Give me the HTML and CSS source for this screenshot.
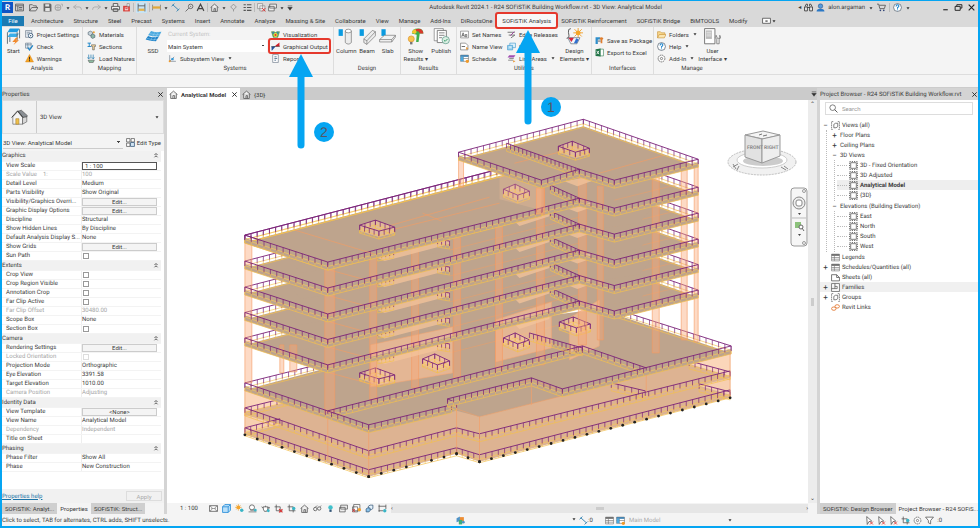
FILE: index.html
```
<!DOCTYPE html>
<html lang="en">
<head>
    <meta charset="UTF-8">
    <meta name="viewport" content="width=device-width, initial-scale=1.0">
    <title>Autodesk Revit 2024.1 - R24 SOFiSTiK Building Workflow.rvt</title>
    <link rel="stylesheet" href="styles.css">
</head>
<body>
    <!-- icon sprite -->
    <svg class="sprite" width="0" height="0">
        <symbol id="window" viewBox="0 0 16 16"><path d="M1 2h14v12H1zM1 5h14M5 5v9M7 8h6M7 11h6" fill="none" stroke="#555" stroke-width="1.5"/></symbol>
        <symbol id="open" viewBox="0 0 16 16"><path d="M1 14V3h5l2 2h5v3M1 14l4-6h11l-4 6z" fill="none" stroke="#555" stroke-width="1.4"/></symbol>
        <symbol id="save" viewBox="0 0 16 16"><path d="M1 1h12l2 2v12H1z" fill="#666"/><path d="M4 2h7v4H4zM4 9h8v5H4z" fill="#e4e4e4"/></symbol>
        <symbol id="sync" viewBox="0 0 16 16"><circle cx="7" cy="8" r="5" fill="none" stroke="#aaa" stroke-width="2"/><path d="M7 4v8M3 8h8M12 2h3v4" fill="none" stroke="#aaa" stroke-width="1.5"/></symbol>
        <symbol id="undo" viewBox="0 0 16 16"><path d="M6 3L1 7l5 4M1 7h10q4 0 4 5" fill="none" stroke="#aaa" stroke-width="1.6"/></symbol>
        <symbol id="redo" viewBox="0 0 16 16"><path d="M10 3l5 4-5 4M15 7H5q-4 0-4 5" fill="none" stroke="#aaa" stroke-width="1.6"/></symbol>
        <symbol id="print" viewBox="0 0 16 16"><path d="M4 6V1h8v5M1 6h14v6H1zM4 10h8v5H4z" fill="#eee" stroke="#555" stroke-width="1.6"/></symbol>
        <symbol id="pdf" viewBox="0 0 16 16"><path d="M2 5h12v10H2z" fill="#d9423c"/><path d="M9 1h4v5H9z" fill="#eee" stroke="#777"/><path d="M5 8h6v5H5z" fill="#f6d5d3"/><path d="M6 10h4" stroke="#c33" stroke-width="1.500"/></symbol>
        <symbol id="measure" viewBox="0 0 16 16"><path d="M2 1v14M14 1v14M2 5h12" fill="none" stroke="#555" stroke-width="1.5"/><path d="M3 10h10v4H3z" fill="#e7b34b"/></symbol>
        <symbol id="align" viewBox="0 0 16 16"><path d="M1 3v10M15 3v10" stroke="#555"/><path d="M1 6h14v4H1z" fill="#e0a83c"/></symbol>
        <symbol id="dimension" viewBox="0 0 16 16"><path d="M3 3l10 9M1 6l5-5M10 15l5-5" fill="none" stroke="#3c87b4" stroke-width="1.7"/></symbol>
        <symbol id="tag" viewBox="0 0 16 16"><circle cx="10" cy="6" r="4" fill="none" stroke="#555" stroke-width="1.4"/><path d="M7 9l-6 6M9 6h2" stroke="#555" stroke-width="1.4"/></symbol>
        <symbol id="letter" viewBox="0 0 16 16"><path d="M2 14L8 2l6 12M4.500 10h7" fill="none" stroke="#444" stroke-width="2"/></symbol>
        <symbol id="home" viewBox="0 0 16 16"><path d="M1 8l7-6 7 6M3 7v8h10V7M7 15v-5h3v5" fill="#eee" stroke="#555" stroke-width="1.4"/></symbol>
        <symbol id="section" viewBox="0 0 16 16"><path d="M8 2l5 5-5 5-5-5zM8 12v3" fill="none" stroke="#888" stroke-width="1.4"/></symbol>
        <symbol id="lines" viewBox="0 0 16 16"><path d="M1 3h4M7 3h8M1 8h4M7 8h8M1 13h4M7 13h8" stroke="#555" stroke-width="2"/></symbol>
        <symbol id="closewin" viewBox="0 0 16 16"><path d="M1 1h9v9H1zM5 5h9v9H5z" fill="#eee" stroke="#777"/><path d="M9 9l6 6M15 9l-6 6" stroke="#d33" stroke-width="1.6"/></symbol>
        <symbol id="switch" viewBox="0 0 16 16"><path d="M3 2h12v7H3zM1 6h10v8H1z" fill="#eee" stroke="#555" stroke-width="1.3"/></symbol>
        <symbol id="caret" viewBox="0 0 8 8"><path d="M2 3h4L4 6z" fill="#333"/></symbol>
        <symbol id="overflow" viewBox="0 0 8 8"><path d="M1 1h6M1 3h6L4 7z" fill="#333" stroke="#333" stroke-width=".6"/></symbol>
        <symbol id="binoculars" viewBox="0 0 16 16"><path d="M2 6l2-4h2v4M14 6l-2-4h-2v4M1 7h5v7H1zM10 7h5v7h-5zM6 8h4" fill="#eee" stroke="#333" stroke-width="1.5"/></symbol>
        <symbol id="user" viewBox="0 0 16 16"><path d="M1 15q0-5 7-5t7 5z" fill="#2b78c5"/><circle cx="8" cy="5.500" r="4" fill="#579bdc" stroke="#234e80"/></symbol>
        <symbol id="cart" viewBox="0 0 16 16"><path d="M0 2h3l2 8h8l2-6H4" fill="none" stroke="#555" stroke-width="1.5"/><circle cx="6" cy="13" r="1.500" fill="#347"/><circle cx="12" cy="13" r="1.500" fill="#347"/></symbol>
        <symbol id="help" viewBox="0 0 16 16"><circle cx="8" cy="8" r="7" fill="#fff" stroke="#456" stroke-width="1.2"/><path d="M5.500 6q0-3 2.500-3t2.500 2.500q0 1.500-2.500 3v1.500M8 11.500v1.500" fill="none" stroke="#1681cc" stroke-width="1.800"/></symbol>
        <symbol id="min" viewBox="0 0 16 16"><path d="M4 12h8" stroke="#222" stroke-width="2"/></symbol>
        <symbol id="restore" viewBox="0 0 16 16"><path d="M5 6V3h9v6h-3M2 6h9v7H2z" fill="none" stroke="#222" stroke-width="1.700"/></symbol>
        <symbol id="close" viewBox="0 0 16 16"><path d="M3 3l10 10M13 3L3 13" stroke="#222" stroke-width="2"/></symbol>
        <symbol id="panel-toggle" viewBox="0 0 16 16"><path d="M1 4h14v9H1z" fill="#fff" stroke="#555" stroke-width="1.500"/><path d="M6 8h4v2H6z" fill="#333"/></symbol>

        <!-- ribbon -->
        <symbol id="start" viewBox="0 0 24 28"><path d="M6 1h16l-4 6H2z" fill="#1e9be0"/><path d="M6 9h15l-4 6H2z" fill="#3baee8"/><path d="M2 7v19M18 7v14M22 2v15M6 15v8" stroke="#5b6770" stroke-width="1.500" fill="none"/><path d="M16 16l-6 7h5l-3 5 9-8h-5l4-4z" fill="#f28a2c"/></symbol>
        <symbol id="proj" viewBox="0 0 16 16"><path d="M1 1h11v12H1z" fill="#e8eef4" stroke="#567"/><path d="M3 4h6M3 7h4" stroke="#567"/><circle cx="10" cy="10" r="4" fill="#fff" stroke="#357" stroke-width="1.500"/><circle cx="10" cy="10" r="1.300" fill="#357"/></symbol>
        <symbol id="check" viewBox="0 0 16 16"><path d="M1 2h10v9H1zM1 5h10M5 2v9" fill="#dff0fa" stroke="#567"/><path d="M5 10l3 4 6-8" fill="none" stroke="#2086c8" stroke-width="2.200"/></symbol>
        <symbol id="warning" viewBox="0 0 16 16"><path d="M8 1l7 13H1z" fill="#f5a623" stroke="#e08a1e"/><path d="M8 5v5M8 11v2" stroke="#222" stroke-width="1.600"/></symbol>
        <symbol id="materials" viewBox="0 0 16 16"><path d="M2 4l4-2 4 2v4l-4 2-4-2z" fill="#c6d4da" stroke="#456"/><path d="M7 9l3-2 4 2v4l-4 2-3-2z" fill="#8fb7a7" stroke="#456"/><circle cx="12" cy="4" r="2" fill="#e9a33b"/></symbol>
        <symbol id="sections" viewBox="0 0 16 16"><path d="M1 2h6M4 2v6M1 8h6" stroke="#2086c8" stroke-width="1.700"/><path d="M8 5h7v3h-2v6h-3V8H8z" fill="#f3d59a" stroke="#555"/></symbol>
        <symbol id="natures" viewBox="0 0 16 16"><path d="M3 1v7M7 1v7M11 1v7M1 6l2 3 2-3M9 6l2 3 2-3" fill="none" stroke="#287db1" stroke-width="1.300"/><path d="M2 11h11l-2 4H4z" fill="#8cbfa1" stroke="#555"/></symbol>
        <symbol id="ssd" viewBox="0 0 28 28"><path d="M10 5q6 3 17 1l-4 8Q13 14 5 12z" fill="#4ba9df"/><path d="M5 13q8 4 18 1l-5 8Q9 22 1 19z" fill="#1f83c9"/><path d="M16 7L9 21M22 7l-8 15M7 9q9 3 18 2M3 17q9 3 17 2" stroke="#9fd3f0" stroke-width=".8" fill="none"/></symbol>
        <symbol id="subsystem" viewBox="0 0 16 16"><path d="M3 2v11h11M3 13l8-8" fill="none" stroke="#567"/><path d="M6 7h4v4H6z" fill="#3498d8"/><circle cx="3" cy="13" r="1.800" fill="#f09a2a"/></symbol>
        <symbol id="visual" viewBox="0 0 16 16"><path d="M1 3h5l2 2 2-2h5l-3 10H4z" fill="#67bd53" stroke="#3b7c46"/><circle cx="8" cy="9" r="3.500" fill="#f3d33c"/><circle cx="8" cy="9" r="1.800" fill="#d33"/><circle cx="4" cy="5" r="1.500" fill="#37c"/><circle cx="12" cy="5" r="1.500" fill="#37c"/></symbol>
        <symbol id="graph" viewBox="0 0 16 16"><path d="M1 8l7-.5V8L2 15H1z" fill="#27549f"/><path d="M8 8V6l7-5v7z" fill="#d5202a"/><path d="M0 8.500L16 7.500" stroke="#222" stroke-width=".9"/></symbol>
        <symbol id="report" viewBox="0 0 16 16"><path d="M3 1h10v14H3z" fill="#fff" stroke="#567"/><path d="M6 5h4M6 8h5M6 11h3" stroke="#357" stroke-width="1.300"/></symbol>
        <symbol id="column" viewBox="0 0 28 28"><path d="M1 2h7v11H1z" fill="#0b9be0"/><path d="M12 5v19q5 5 10 0V5z" fill="#ececec" stroke="#666"/><ellipse cx="17" cy="5" rx="5" ry="3" fill="#fff" stroke="#666"/></symbol>
        <symbol id="beam" viewBox="0 0 28 28"><path d="M1 2h7v11H1z" fill="#0b9be0"/><path d="M8 18L22 4l5 2v7L13 27l-5-3z" fill="#ececec" stroke="#666"/><path d="M8 18l5 3v6M13 21L27 6" fill="none" stroke="#666"/></symbol>
        <symbol id="slab" viewBox="0 0 28 28"><path d="M4 2h7v11H4z" fill="#0b9be0"/><path d="M1 19l8-7h18l-6 7v4H1zM1 19h20M27 12v3l-6 8" fill="#f2f2f2" stroke="#666"/></symbol>
        <symbol id="results" viewBox="0 0 28 28"><path d="M8 9q0-8 10-8 9 0 9 8h-6l-2 14h-4l1-12z" fill="#3fae49"/><path d="M14 2q12-3 13 7h-6q-1-4-7-4z" fill="#d8392b"/><path d="M8 8q1-6 6-6l2 5-3 3z" fill="#f6c52e"/><circle cx="7" cy="18" r="5" fill="#f8c44f" stroke="#d98b28"/><path d="M5 23h4v4H5z" fill="#777"/></symbol>
        <symbol id="publish" viewBox="0 0 28 28"><path d="M2 1h15v20H2z" fill="#fff" stroke="#666"/><path d="M7 4h15v20H7zM10 8h9M10 12h9M10 16h5" fill="#fff" stroke="#666" stroke-width="1.300"/><circle cx="21" cy="20" r="6" fill="#dcefe4" stroke="#487"/><path d="M18 20l2 2 4-4" fill="none" stroke="#396" stroke-width="1.600"/></symbol>
        <symbol id="names" viewBox="0 0 16 16"><path d="M1 2h14v12H1z" fill="#fff" stroke="#666"/><path d="M3 12l2.500-7L8 12M4 10h3M12 12V8H9.500v4H12" fill="none" stroke="#444" stroke-width="1.200"/></symbol>
        <symbol id="nameview" viewBox="0 0 16 16"><path d="M1 2h9l4 4v8H1z" fill="#fff" stroke="#555"/><path d="M3 8h6" stroke="#555" stroke-width="1.500"/><path d="M11 9l4 2-4 3z" fill="#e9952f"/></symbol>
        <symbol id="schedule" viewBox="0 0 16 16"><path d="M1 2h14v11H1z" fill="#fff" stroke="#666"/><path d="M1 2h14v3H1z" fill="#357cae"/><path d="M1 8h14M6 5v8" stroke="#666"/><path d="M1 5h5v8H1z" fill="#4ba9df"/><circle cx="13" cy="13" r="3" fill="#f09a2a"/></symbol>
        <symbol id="edge" viewBox="0 0 16 16"><path d="M1 4h13M3 9h11l-7 5" fill="none" stroke="#666" stroke-width="1.500"/><path d="M6 10l7-7" stroke="#9a3f9c" stroke-width="1.700"/></symbol>
        <symbol id="links" viewBox="0 0 16 16"><path d="M5 2h10v8H5z" fill="#dff1fb" stroke="#2a8fca"/><path d="M1 6h9v8H1z" fill="#9ed4f1" stroke="#2a8fca"/><path d="M4 9h4" stroke="#fff" stroke-width="1.500"/></symbol>
        <symbol id="areas" viewBox="0 0 16 16"><path d="M4 2h11l-3 4H1z" fill="#a14eb1"/><path d="M4 8h8M2 11h9" stroke="#777" stroke-width="1.400"/><path d="M11 11l4 2-4 2z" fill="#e9952f"/></symbol>
        <symbol id="elements" viewBox="0 0 28 28"><path d="M8 1q-5 0-4 6l1 6q0 4-4 4" fill="none" stroke="#555" stroke-width="1.500"/><path d="M20 0v16M12 8h16M14 2l12 12M26 2L14 14" stroke="#f0a02c" stroke-width="1.500"/><circle cx="20" cy="8" r="4" fill="#f6a526"/><path d="M3 16h20l-5 10H8z" fill="#f4f7fb" stroke="#456"/><path d="M4 16h9l-4 7z" fill="#d7263d"/><path d="M13 25l4-8 4 2-3 6z" fill="#2f6fd0"/></symbol>
        <symbol id="package" viewBox="0 0 16 16"><path d="M1 2h8v4H5v8H1z" fill="#2d8ecb"/><path d="M8 4q3-4 7 0l-2 3v6h-3V7z" fill="#df7e2f"/><path d="M5 8h5v2H5z" fill="#777"/></symbol>
        <symbol id="excel" viewBox="0 0 16 16"><path d="M8 2h7v12H8z" fill="#fff" stroke="#217346"/><path d="M1 2l9-1v14l-9-1z" fill="#217346"/><path d="M3 5l4 6M7 5l-4 6" stroke="#fff" stroke-width="1.500"/></symbol>
        <symbol id="folders" viewBox="0 0 16 16"><path d="M1 14V3h5l2 2h6v3" fill="#f7d78d" stroke="#c48a2a"/><path d="M1 14l3-6h12l-3 6z" fill="#fbe5b0" stroke="#c48a2a"/></symbol>
        <symbol id="gear" viewBox="0 0 16 16"><circle cx="8" cy="8" r="6" fill="#fff" stroke="#666" stroke-width="1.600" stroke-dasharray="3 1"/><circle cx="8" cy="8" r="2" fill="none" stroke="#666" stroke-width="1.400"/></symbol>
        <symbol id="ui" viewBox="0 0 28 28"><path d="M1 1h17v25H1z" fill="#fff" stroke="#666" stroke-width="1.400"/><path d="M3 4h10v14H3z" fill="#bbb"/><path d="M4 7h8M4 10h8M4 13h8" stroke="#fff"/><path d="M20 12q-3 4 1 7v7h4v-7q4-3 1-7v5h-4z" fill="#eee" stroke="#555"/></symbol>

        <!-- browser tree -->
        <symbol id="views" viewBox="0 0 16 16"><path d="M4 1H1v14h3M12 1h3v14h-3" fill="none" stroke="#666" stroke-width="1.300" stroke-dasharray="3 1"/><path d="M5 6l3-2h4v6l-3 2H5z" fill="none" stroke="#555" stroke-width="1.300"/></symbol>
        <symbol id="view" viewBox="0 0 16 16"><path d="M3 3h10v10H3z" fill="#fff" stroke="#555" stroke-width="1.300"/><path d="M1 1h14v14H1z" fill="none" stroke="#555" stroke-width="1.600" stroke-dasharray="2 2"/></symbol>
        <symbol id="legend" viewBox="0 0 16 16"><path d="M1 2h14v12H1zM1 8h14M1 11h14M6 5v9" fill="#fff" stroke="#666"/><path d="M1 2h14v3H1z" fill="#666"/></symbol>
        <symbol id="sheet" viewBox="0 0 16 16"><path d="M1 3h9l5 5v6H1zM10 3v5h5" fill="#fff" stroke="#555" stroke-width="1.400"/></symbol>
        <symbol id="family" viewBox="0 0 16 16"><path d="M1 1h14v14H1zM1 10h6V1M7 6h4v4H7" fill="#fff" stroke="#555" stroke-width="1.300"/></symbol>
        <symbol id="rlink" viewBox="0 0 16 16"><ellipse cx="5" cy="10" rx="4" ry="3" fill="none" stroke="#e37a35" stroke-width="1.600"/><ellipse cx="11" cy="6" rx="4" ry="3" fill="none" stroke="#e37a35" stroke-width="1.600"/></symbol>
        <symbol id="search" viewBox="0 0 16 16"><circle cx="6.500" cy="6.500" r="5" fill="none" stroke="#555" stroke-width="1.300"/><path d="M10 10l5 5" stroke="#555" stroke-width="1.700"/></symbol>
        <symbol id="house" viewBox="0 0 28 28"><path d="M3 13L11 4l8 9v12H3z" fill="#f5f5f5" stroke="#555"/><path d="M11 4l6-2 10 9-1 2-7 1z" fill="#8a8f94" stroke="#444"/><path d="M19 14l7-1v8l-7 4z" fill="#d8d8d8" stroke="#555"/><path d="M8 16h5v9H8z" fill="#f0c04a" stroke="#a98330"/><path d="M1 14L11 3l9 11" fill="none" stroke="#444" stroke-width="1.600"/></symbol>
        <symbol id="type" viewBox="0 0 16 16"><path d="M1 1h6v6H1zM9 1h6v6H9zM1 9h6v6H1z" fill="#fff" stroke="#555" stroke-width="1.300"/><path d="M8 8h7v7H8z" fill="#cfe3f3" stroke="#357" stroke-width="1.300"/></symbol>
        <symbol id="collapse" viewBox="0 0 8 8"><path d="M2 4l2-2 2 2M2 7l2-2 2 2" fill="none" stroke="#222"/></symbol>

        <!-- view bar -->
        <symbol id="detail" viewBox="0 0 16 16"><path d="M1 3h14v10H1z" fill="#fff" stroke="#555" stroke-width="1.400"/><path d="M1 3l4 3v4l-4 3M15 3l-4 3v4l4 3M5 8h6" fill="none" stroke="#555"/></symbol>
        <symbol id="cube" viewBox="0 0 16 16"><path d="M1 5l4-4h10v10l-4 4H1zM1 5h10v10M11 5l4-4" fill="#b9e0fa" stroke="#1d87d6" stroke-width="1.400"/></symbol>
        <symbol id="displace" viewBox="0 0 16 16"><path d="M6 4l3-2h5v6l-3 2H6z" fill="#e4f2fb" stroke="#357" stroke-width="1.300"/><path d="M2 9l2-2h5v5l-2 2H2z" fill="#8cc4ea" stroke="#357" stroke-width="1.300"/></symbol>
        <symbol id="sun" viewBox="0 0 16 16"><path d="M6 0v12M0 6h12M2 2l8 8M10 2l-8 8" stroke="#ee9d2b"/><circle cx="6" cy="6" r="3.500" fill="#f5a52d"/><circle cx="12" cy="11" r="3" fill="#39b5c6"/></symbol>
        <symbol id="shadow" viewBox="0 0 16 16"><circle cx="7" cy="6" r="4.500" fill="#fff" stroke="#555" stroke-width="1.400"/><path d="M1 14h14M4 11h7" stroke="#777" stroke-width="1.500"/><circle cx="13" cy="11" r="2.500" fill="#39b5c6"/></symbol>
        <symbol id="teapot" viewBox="0 0 16 16"><path d="M4 5h8q1 4-2 8H6Q3 9 4 5zM4 7L1 5M8 5V3M12 6h3l-2 4" fill="#fff" stroke="#555" stroke-width="1.400"/><circle cx="13" cy="12" r="2.500" fill="#39b5c6"/></symbol>
        <symbol id="cropx" viewBox="0 0 16 16"><path d="M4 1v11h11M1 5h10v10" fill="none" stroke="#555" stroke-width="1.400"/><path d="M9 9l6 6M15 9l-6 6" stroke="#d33" stroke-width="2"/></symbol>
        <symbol id="crop" viewBox="0 0 16 16"><path d="M4 1v11h11M1 5h10v10" fill="none" stroke="#555" stroke-width="1.400"/><circle cx="12" cy="8" r="3" fill="#39b5c6"/></symbol>
        <symbol id="constraints" viewBox="0 0 16 16"><path d="M2 1v13M1 4h13M14 1v8M1 12h8" fill="none" stroke="#555" stroke-width="1.400"/><circle cx="12" cy="12" r="3" fill="#39b5c6"/></symbol>
        <symbol id="glasses" viewBox="0 0 16 16"><circle cx="4" cy="9" r="3" fill="none" stroke="#555" stroke-width="1.400"/><circle cx="11" cy="8" r="3" fill="none" stroke="#555" stroke-width="1.400"/><path d="M3 6l5-3M12 5l3-2" stroke="#555"/></symbol>
        <symbol id="bulb" viewBox="0 0 16 16"><circle cx="8" cy="6" r="4" fill="#3fc1cb"/><path d="M6 10h4v4H6z" fill="#357"/></symbol>
        <symbol id="analytic" viewBox="0 0 16 16"><path d="M3 1h11v11H3zM1 5h9v9H1z" fill="#fff" stroke="#555" stroke-width="1.300"/><path d="M1 9l4 5M5 9l-4 5" stroke="#d33" stroke-width="1.500"/><circle cx="13" cy="10" r="3" fill="#f3a12e"/></symbol>
        <symbol id="funnel" viewBox="0 0 16 16"><path d="M1 2h14l-5 6v6l-4-2V8z" fill="#fff" stroke="#555" stroke-width="1.400"/></symbol>
        <symbol id="select" viewBox="0 0 16 16"><path d="M3 1l9 8-5 1-3 5z" fill="#fff" stroke="#555" stroke-width="1.400"/><path d="M9 10l5 5M14 10l-5 5" stroke="#d33" stroke-width="1.600"/></symbol>
        <symbol id="worksets" viewBox="0 0 16 16"><path d="M1 4l6-3v8l-6 2z" fill="#4f93c8"/><path d="M7 2h7v7H7z" fill="#ed8d33"/><path d="M5 7h6v8H5z" fill="#3fae77"/><circle cx="13" cy="11" r="2.500" fill="#4f93c8"/></symbol>
    </svg>

    <div class="app">
        <header class="titlebar">
            <div class="qat">
                <span class="logo">R</span>
                <svg class="ic"><use href="#window"/></svg>
                <i class="space"></i>
                <svg class="ic"><use href="#open"/></svg>
                <i class="space"></i>
                <svg class="ic"><use href="#save"/></svg>
                <svg class="ic"><use href="#sync"/></svg>
                <svg class="caret"><use href="#caret"/></svg>
                <svg class="ic"><use href="#undo"/></svg>
                <svg class="caret"><use href="#caret"/></svg>
                <svg class="ic"><use href="#redo"/></svg>
                <svg class="caret"><use href="#caret"/></svg>
                <svg class="ic"><use href="#print"/></svg>
                <svg class="ic"><use href="#pdf"/></svg>
                <i class="bar"></i>
                <span class="active"><svg class="ic"><use href="#measure"/></svg></span>
                <i class="bar"></i>
                <svg class="ic"><use href="#align"/></svg>
                <svg class="caret"><use href="#caret"/></svg>
                <svg class="ic"><use href="#dimension"/></svg>
                <i class="space"></i>
                <svg class="ic"><use href="#tag"/></svg>
                <svg class="ic"><use href="#letter"/></svg>
                <i class="bar"></i>
                <svg class="ic"><use href="#home"/></svg>
                <svg class="caret"><use href="#caret"/></svg>
                <svg class="ic"><use href="#section"/></svg>
                <i class="space"></i>
                <svg class="ic"><use href="#lines"/></svg>
                <i class="bar"></i>
                <svg class="ic"><use href="#closewin"/></svg>
                <svg class="ic"><use href="#switch"/></svg>
                <svg class="caret"><use href="#caret"/></svg>
                <svg class="caret"><use href="#overflow"/></svg>
            </div>
            <div class="title">Autodesk Revit 2024.1 - R24 SOFiSTiK Building Workflow.rvt - 3D View: Analytical Model</div>
            <div class="account">
                <span class="back">◂</span>
                <svg class="ic"><use href="#binoculars"/></svg>
                <svg class="ic"><use href="#user"/></svg>
                <span>alon.argaman</span>
                <svg class="caret"><use href="#caret"/></svg>
                <svg class="ic"><use href="#cart"/></svg>
                <i class="bar"></i>
                <svg class="ic"><use href="#help"/></svg>
                <svg class="caret"><use href="#caret"/></svg>
            </div>
            <div class="win-buttons">
                <svg class="ic"><use href="#min"/></svg>
                <svg class="ic"><use href="#restore"/></svg>
                <svg class="ic"><use href="#close"/></svg>
            </div>
        </header>

        <nav class="tabs">
            <button class="file">File</button>
            <button>Architecture</button>
            <button>Structure</button>
            <button>Steel</button>
            <button>Precast</button>
            <button>Systems</button>
            <button>Insert</button>
            <button>Annotate</button>
            <button>Analyze</button>
            <button>Massing &amp; Site</button>
            <button>Collaborate</button>
            <button>View</button>
            <button>Manage</button>
            <button>Add-Ins</button>
            <button>DiRootsOne</button>
            <button class="current marked">SOFiSTiK Analysis</button>
            <button>SOFiSTiK Reinforcement</button>
            <button>SOFiSTiK Bridge</button>
            <button>BiMTOOLS</button>
            <button>Modify</button>
            <svg class="ic toggle"><use href="#panel-toggle"/></svg>
            <svg class="caret"><use href="#caret"/></svg>
        </nav>

        <section class="ribbon">
            <div class="group g-analysis">
                <div class="tools">
                    <button class="big"><svg><use href="#start"/></svg>Start</button>
                    <div class="stack">
                        <button><svg class="ic"><use href="#proj"/></svg>Project Settings</button>
                        <button><svg class="ic"><use href="#check"/></svg>Check</button>
                        <button><svg class="ic"><use href="#warning"/></svg>Warnings</button>
                    </div>
                </div>
                <div class="name">Analysis</div>
            </div>
            <div class="group g-mapping">
                <div class="tools">
                    <div class="stack">
                        <button><svg class="ic"><use href="#materials"/></svg>Materials</button>
                        <button><svg class="ic"><use href="#sections"/></svg>Sections</button>
                        <button><svg class="ic"><use href="#natures"/></svg>Load Natures</button>
                    </div>
                </div>
                <div class="name">Mapping</div>
            </div>
            <div class="group g-systems">
                <div class="tools">
                    <button class="big ssd"><svg><use href="#ssd"/></svg>SSD</button>
                    <div class="stack system">
                        <label for="system">Current System:</label>
                        <select id="system"><option>Main System</option></select>
                        <button><svg class="ic"><use href="#subsystem"/></svg>Subsystem View<svg class="caret"><use href="#caret"/></svg></button>
                    </div>
                    <div class="stack">
                        <button><svg class="ic"><use href="#visual"/></svg>Visualization</button>
                        <button class="marked"><svg class="ic"><use href="#graph"/></svg>Graphical Output</button>
                        <button><svg class="ic"><use href="#report"/></svg>Report</button>
                    </div>
                </div>
                <div class="name">Systems</div>
            </div>
            <div class="group g-design">
                <div class="tools">
                    <button class="big"><svg><use href="#column"/></svg>Column</button>
                    <button class="big"><svg><use href="#beam"/></svg>Beam</button>
                    <button class="big"><svg><use href="#slab"/></svg>Slab</button>
                </div>
                <div class="name">Design</div>
            </div>
            <div class="group g-results">
                <div class="tools">
                    <button class="big"><svg><use href="#results"/></svg>Show<br>Results ▾</button>
                    <button class="big"><svg><use href="#publish"/></svg>Publish</button>
                </div>
                <div class="name">Results</div>
            </div>
            <div class="group g-utilities">
                <div class="tools">
                    <div class="stack">
                        <button><svg class="ic"><use href="#names"/></svg>Set Names</button>
                        <button><svg class="ic"><use href="#nameview"/></svg>Name View</button>
                        <button><svg class="ic"><use href="#schedule"/></svg>Schedule</button>
                    </div>
                    <div class="stack">
                        <button><svg class="ic"><use href="#edge"/></svg>Edge Releases</button>
                        <button><svg class="ic"><use href="#links"/></svg>Links</button>
                        <button><svg class="ic"><use href="#areas"/></svg>Link Areas<svg class="caret"><use href="#caret"/></svg></button>
                    </div>
                    <button class="big"><svg><use href="#elements"/></svg>Design<br>Elements ▾</button>
                </div>
                <div class="name">Utilities</div>
            </div>
            <div class="group g-interfaces">
                <div class="tools">
                    <div class="stack two">
                        <button><svg class="ic"><use href="#package"/></svg>Save as Package</button>
                        <button><svg class="ic"><use href="#excel"/></svg>Export to Excel</button>
                    </div>
                </div>
                <div class="name">Interfaces</div>
            </div>
            <div class="group g-manage">
                <div class="tools">
                    <div class="stack">
                        <button><svg class="ic"><use href="#folders"/></svg>Folders<svg class="caret"><use href="#caret"/></svg></button>
                        <button><svg class="ic"><use href="#help"/></svg>Help<svg class="caret"><use href="#caret"/></svg></button>
                        <button><svg class="ic"><use href="#gear"/></svg>Add-In<svg class="caret"><use href="#caret"/></svg></button>
                    </div>
                    <button class="big"><svg><use href="#ui"/></svg>User<br>Interface ▾</button>
                </div>
                <div class="name">Manage</div>
            </div>
        </section>
        <div class="options-bar"></div>

        <main class="workspace">
            <aside class="dock properties">
                <h2>Properties<svg class="ic"><use href="#close"/></svg></h2>
                <div class="type">
                    <span class="thumb"><svg><use href="#house"/></svg></span>
                    <span class="type-name">3D View</span>
                    <svg class="caret"><use href="#caret"/></svg>
                </div>
                <div class="instance">
                    <select aria-label="Instance"><option>3D View: Analytical Model</option></select>
                    <button><svg class="ic"><use href="#type"/></svg>Edit Type</button>
                </div>
                <div class="grid">
                    <table>
                        <tr class="head"><th colspan="2">Graphics<svg class="caret"><use href="#collapse"/></svg></th></tr>
                        <tr><td><label for="scale">View Scale</label></td><td><input type="text" id="scale" value="1 : 100"></td></tr>
                        <tr class="off"><td>Scale Value &nbsp;&nbsp; 1:</td><td>100</td></tr>
                        <tr><td>Detail Level</td><td>Medium</td></tr>
                        <tr><td>Parts Visibility</td><td>Show Original</td></tr>
                        <tr><td>Visibility/Graphics Overri...</td><td><button>Edit...</button></td></tr>
                        <tr><td>Graphic Display Options</td><td><button>Edit...</button></td></tr>
                        <tr><td>Discipline</td><td>Structural</td></tr>
                        <tr><td>Show Hidden Lines</td><td>By Discipline</td></tr>
                        <tr><td>Default Analysis Display S...</td><td>None</td></tr>
                        <tr><td>Show Grids</td><td><button>Edit...</button></td></tr>
                        <tr><td><label for="sun-path">Sun Path</label></td><td><input type="checkbox" id="sun-path"></td></tr>
                        <tr class="head"><th colspan="2">Extents<svg class="caret"><use href="#collapse"/></svg></th></tr>
                        <tr><td><label for="crop-view">Crop View</label></td><td><input type="checkbox" id="crop-view"></td></tr>
                        <tr><td><label for="crop-region">Crop Region Visible</label></td><td><input type="checkbox" id="crop-region"></td></tr>
                        <tr><td><label for="annotation">Annotation Crop</label></td><td><input type="checkbox" id="annotation"></td></tr>
                        <tr><td><label for="far-clip">Far Clip Active</label></td><td><input type="checkbox" id="far-clip"></td></tr>
                        <tr class="off"><td>Far Clip Offset</td><td>30480.00</td></tr>
                        <tr><td>Scope Box</td><td>None</td></tr>
                        <tr><td><label for="section-box">Section Box</label></td><td><input type="checkbox" id="section-box"></td></tr>
                        <tr class="head"><th colspan="2">Camera<svg class="caret"><use href="#collapse"/></svg></th></tr>
                        <tr><td>Rendering Settings</td><td><button>Edit...</button></td></tr>
                        <tr class="off"><td><label for="locked">Locked Orientation</label></td><td><input type="checkbox" id="locked" disabled></td></tr>
                        <tr><td>Projection Mode</td><td>Orthographic</td></tr>
                        <tr><td>Eye Elevation</td><td>3391.58</td></tr>
                        <tr><td>Target Elevation</td><td>1010.00</td></tr>
                        <tr class="off"><td>Camera Position</td><td>Adjusting</td></tr>
                        <tr class="head"><th colspan="2">Identity Data<svg class="caret"><use href="#collapse"/></svg></th></tr>
                        <tr><td>View Template</td><td><button>&lt;None&gt;</button></td></tr>
                        <tr><td>View Name</td><td>Analytical Model</td></tr>
                        <tr class="off"><td>Dependency</td><td>Independent</td></tr>
                        <tr><td>Title on Sheet</td><td></td></tr>
                        <tr class="head"><th colspan="2">Phasing<svg class="caret"><use href="#collapse"/></svg></th></tr>
                        <tr><td>Phase Filter</td><td>Show All</td></tr>
                        <tr><td>Phase</td><td>New Construction</td></tr>
                    </table>
                </div>
                <div class="apply-row">
                    <a href="#">Properties help</a>
                    <button disabled>Apply</button>
                </div>
                <div class="dock-tabs">
                    <button>SOFiSTiK: Analyt...</button>
                    <button class="current">Properties</button>
                    <button>SOFiSTiK: Struct...</button>
                </div>
            </aside>

            <section class="center">
                <div class="view-tabs">
                    <button class="current"><svg class="ic"><use href="#home"/></svg>Analytical Model<svg class="x"><use href="#close"/></svg></button>
                    <button><svg class="ic"><use href="#home"/></svg>{3D}</button>
                    <svg class="caret end"><use href="#overflow"/></svg>
                </div>
                <div class="view-body">
                    <div class="canvas">
                        <svg id="model" viewBox="167 100 642 403"></svg>
                        <svg class="viewcube" viewBox="0 0 70 50">
                            <ellipse cx="35" cy="34" rx="34" ry="13" fill="#f1f1f1" stroke="#bbb" stroke-dasharray="2 1"/>
                            <ellipse cx="35" cy="32" rx="25" ry="8" fill="#fff" stroke="#ccc"/>
                            <ellipse cx="36" cy="33" rx="20" ry="5" fill="#ccc"/>
                            <path d="M18 7L36 3l17 4-17 4z" fill="#f4f4f4" stroke="#999"/>
                            <path d="M18 7l17 4v24l-17-6z" fill="#e2e2e2" stroke="#999"/>
                            <path d="M35 11l18-4v21l-18 7z" fill="#eee" stroke="#999"/>
                            <path d="M32 7l3-1M36 8l4-1" stroke="#777"/>
                            <text x="20" y="21">FRONT</text>
                            <text x="37" y="21">RIGHT</text>
                            <path d="M6 39l5-3M6 36l3 5M12 38l-2 4M54 39l5 3M57 38l4 3" stroke="#888"/>
                        </svg>
                        <svg class="navbar" viewBox="0 0 18 60">
                            <rect x="1" y="1" width="16" height="58" rx="3" fill="#f6f6f6" stroke="#999"/>
                            <circle cx="14" cy="4" r="1.500" fill="none" stroke="#777" stroke-width=".7"/>
                            <circle cx="9" cy="16" r="6" fill="#eee" stroke="#888"/>
                            <rect x="6" y="13" width="6" height="6" rx="2" fill="#fff" stroke="#888"/>
                            <path d="M8 26h3l-1.500 2zM8 47h3l-1.500 2z" fill="#444"/>
                            <path d="M2 31h14" stroke="#bbb"/>
                            <path d="M5 35h6v6H5z" fill="#8cc27b"/>
                            <circle cx="11" cy="40" r="2" fill="#fff" stroke="#666"/>
                            <path d="M12 41l2 3" stroke="#666"/>
                            <circle cx="14" cy="56" r="1.500" fill="none" stroke="#777" stroke-width=".7"/>
                        </svg>
                    </div>
                    <div class="vscroll"><i>⌃</i><b></b><i>⌄</i></div>
                </div>
                <div class="view-bar">
                    <span class="scale">1 : 100</span>
                    <svg class="ic"><use href="#detail"/></svg>
                    <svg class="ic"><use href="#cube"/></svg>
                    <svg class="ic"><use href="#sun"/></svg>
                    <svg class="ic"><use href="#shadow"/></svg>
                    <svg class="ic"><use href="#teapot"/></svg>
                    <svg class="ic"><use href="#cropx"/></svg>
                    <svg class="ic"><use href="#crop"/></svg>
                    <svg class="ic"><use href="#home"/></svg>
                    <svg class="ic"><use href="#glasses"/></svg>
                    <svg class="ic"><use href="#bulb"/></svg>
                    <svg class="ic"><use href="#switch"/></svg>
                    <svg class="ic"><use href="#analytic"/></svg>
                    <svg class="ic"><use href="#displace"/></svg>
                    <svg class="ic"><use href="#constraints"/></svg>
                    <span class="hscroll"><i>‹</i><b></b><i>›</i></span>
                </div>
            </section>

            <aside class="dock browser">
                <h2>Project Browser - R24 SOFiSTiK Building Workflow.rvt<svg class="ic"><use href="#close"/></svg></h2>
                <div class="search">
                    <svg class="ic"><use href="#search"/></svg>
                    <input type="text" placeholder="Search" aria-label="Search">
                </div>
                <ul class="tree">
                    <li><p><i>−</i><svg class="ic"><use href="#views"/></svg>Views (all)</p>
                        <ul>
                            <li><p><i>+</i>Floor Plans</p></li>
                            <li><p><i>+</i>Ceiling Plans</p></li>
                            <li><p><i>−</i>3D Views</p>
                                <ul class="leaves">
                                    <li><p><svg class="ic"><use href="#view"/></svg>3D - Fixed Orientation</p></li>
                                    <li><p><svg class="ic"><use href="#view"/></svg>3D Adjusted</p></li>
                                    <li><p class="selected"><svg class="ic"><use href="#view"/></svg>Analytical Model</p></li>
                                    <li><p><svg class="ic"><use href="#view"/></svg>{3D}</p></li>
                                </ul>
                            </li>
                            <li><p><i>−</i>Elevations (Building Elevation)</p>
                                <ul class="leaves">
                                    <li><p><svg class="ic"><use href="#view"/></svg>East</p></li>
                                    <li><p><svg class="ic"><use href="#view"/></svg>North</p></li>
                                    <li><p><svg class="ic"><use href="#view"/></svg>South</p></li>
                                    <li><p><svg class="ic"><use href="#view"/></svg>West</p></li>
                                </ul>
                            </li>
                        </ul>
                    </li>
                    <li><p><i></i><svg class="ic"><use href="#legend"/></svg>Legends</p></li>
                    <li><p><i>+</i><svg class="ic"><use href="#legend"/></svg>Schedules/Quantities (all)</p></li>
                    <li><p><i></i><svg class="ic"><use href="#sheet"/></svg>Sheets (all)</p></li>
                    <li class="shaded"><p><i>+</i><svg class="ic"><use href="#family"/></svg>Families</p></li>
                    <li><p><i>+</i><svg class="ic"><use href="#views"/></svg>Groups</p></li>
                    <li><p><i></i><svg class="ic"><use href="#rlink"/></svg>Revit Links</p></li>
                </ul>
                <div class="dock-tabs">
                    <button>SOFiSTiK: Design Browser</button>
                    <button class="current">Project Browser - R24 SOFiS...</button>
                </div>
            </aside>
        </main>

        <footer class="status">
            <span class="hint">Click to select, TAB for alternates, CTRL adds, SHIFT unselects.</span>
            <svg class="ic"><use href="#worksets"/></svg>
            <span class="workset"><svg class="caret"><use href="#caret"/></svg></span>
            <span class="requests"><svg class="ic"><use href="#dimension"/></svg>:0</span>
            <svg class="ic"><use href="#legend"/></svg>
            <svg class="ic"><use href="#schedule"/></svg>
            <span class="option">Main Model<svg class="caret"><use href="#caret"/></svg></span>
            <span class="filters">
                <svg class="ic"><use href="#select"/></svg>
                <svg class="ic"><use href="#select"/></svg>
                <svg class="ic"><use href="#select"/></svg>
                <svg class="ic"><use href="#crop"/></svg>
                <svg class="ic"><use href="#gear"/></svg>
                <svg class="ic"><use href="#funnel"/></svg>:0
            </span>
        </footer>

        <!-- step callouts -->
        <svg class="arrow arrow-1" viewBox="0 0 26 96"><path d="M13 0l12 23H1z"/><path d="M13 20v71" class="shaft"/></svg>
        <span class="step step-1">1</span>
        <svg class="arrow arrow-2" viewBox="0 0 26 96"><path d="M13 0l12 23H1z"/><path d="M13 20v71" class="shaft"/></svg>
        <span class="step step-2">2</span>
    </div>

    <script src="model.js"></script>
</body>
</html>
```

FILE: styles.css
```
* {
    box-sizing: border-box;
}
body {
    margin: 0;
    font-family: Roboto, 'Open Sans', sans-serif;
    font-size: 6px;
    line-height: 9px;
    color: #3a3a3a;
    text-rendering: geometricPrecision;
}
button, input, select {
    font: inherit;
    color: inherit;
    border: none;
    border-radius: 0;
    background: none;
    padding: 0;
    margin: 0;
    white-space: nowrap;
}
select {
    appearance: none;
    background-image: linear-gradient(45deg, transparent 50%, #444 50%), linear-gradient(-45deg, transparent 50%, #444 50%);
    background-size: 2px 2px;
    background-position: right 4px center, right 2px center;
    background-repeat: no-repeat;
}
h2, p, ul {
    margin: 0;
    padding: 0;
    font-size: 6px;
    font-weight: normal;
}
.sprite {
    position: absolute;
}
.app {
    position: relative;
    display: flex;
    flex-direction: column;
    height: 100vh;
    border: 2px solid #05a5f2;
    border-top-width: 1px;
    background: #f4f4f4;
    overflow: hidden;
}
.ic {
    width: 9px;
    height: 9px;
    flex: none;
}
.caret {
    width: 6px;
    height: 6px;
    flex: none;
}

/* title bar */
.titlebar {
    display: flex;
    align-items: center;
    height: 13px;
    flex: none;
    background: #d9d9d9;
}
.qat, .account, .win-buttons {
    display: flex;
    align-items: center;
    gap: 2px;
}
.logo {
    width: 11px;
    height: 11px;
    background: #0f55c4;
    color: #fff;
    font-weight: bold;
    font-size: 8px;
    line-height: 11px;
    text-align: center;
}
.space {
    width: 1px;
}
.bar {
    width: 1px;
    height: 9px;
    background: #bbb;
}
.active {
    display: flex;
    padding: 1px;
    background: #c8e4f5;
}
.title {
    flex: 1;
    text-align: center;
}
.account {
    gap: 3px;
    margin-right: 30px;
}
.win-buttons {
    gap: 4px;
    margin-right: 2px;
}

/* ribbon tabs */
.tabs {
    display: flex;
    align-items: center;
    height: 13px;
    flex: none;
    background: #d9d9d9;
}
.tabs button {
    height: 13px;
    padding: 0 5px;
}
.tabs .file {
    height: 10px;
    width: 22px;
    margin-right: 2px;
    background: #1b7ab3;
    color: #fff;
}
.tabs .current {
    background: #f7f7f7;
}
.toggle {
    margin-left: 10px;
}
.marked {
    outline: 2px solid #e5392d;
    border-radius: 1px;
}

/* ribbon */
.ribbon {
    display: flex;
    height: 48px;
    flex: none;
    border-bottom: 1px solid #ddd;
}
.group {
    display: flex;
    flex-direction: column;
    flex: none;
    border-right: 1px solid #ddd;
}
.group:last-child {
    border-right: none;
}
.tools {
    display: flex;
    height: 37px;
    padding: 1px 2px 0;
}
.name {
    text-align: center;
}
.stack {
    display: flex;
    flex-direction: column;
}
.stack button, .stack label, .stack select {
    display: flex;
    align-items: center;
    gap: 3px;
    height: 12px;
    padding: 0 1px;
}
.stack.two {
    padding-top: 6px;
}
.big {
    display: flex;
    flex-direction: column;
    align-items: center;
    width: 22px;
    line-height: 8px;
}
.big svg {
    width: 17px;
    height: 17px;
    margin-bottom: 2px;
    flex: none;
}
.g-analysis { width: 81px; }
.g-mapping { width: 54px; }
.g-systems { width: 197px; }
.g-design { width: 67px; }
.g-results { width: 56px; }
.g-utilities { width: 135px; }
.g-interfaces { width: 62px; }
.g-manage { width: 76px; }
.g-results .big, .g-manage .big, .g-utilities .big {
    width: 27px;
}
.g-utilities .stack {
    width: 47px;
}
.g-utilities .stack + .stack {
    width: 55px;
}
.g-manage .stack {
    width: 43px;
}
.g-analysis .stack, .g-mapping .stack {
    margin-left: 1px;
}
.ssd {
    width: 28px;
}
.system {
    width: 103px;
}
.system label {
    color: #c4c4c4;
}
.system select {
    width: 100px;
    background-color: #fff;
}
.options-bar {
    height: 13px;
    flex: none;
    border-bottom: 1px solid #ccc;
}

/* docked panels */
.workspace {
    display: flex;
    flex: 1;
    min-height: 0;
    gap: 3px;
    background: #d4d4d4;
}
.dock {
    display: flex;
    flex-direction: column;
    flex: none;
    background: #fff;
}
.properties {
    width: 162px;
}
.browser {
    width: 158px;
}
.dock h2 {
    display: flex;
    align-items: center;
    justify-content: space-between;
    height: 12px;
    flex: none;
    background: #d4d4d4;
}
.dock h2 .ic {
    width: 7px;
    height: 7px;
}
.type {
    display: flex;
    align-items: center;
    height: 34px;
    padding-right: 3px;
    background: #f1f1f1;
    border: 1px solid #ddd;
}
.thumb {
    display: flex;
    align-items: center;
    justify-content: center;
    width: 34px;
    height: 32px;
    border-right: 1px solid #ccc;
}
.thumb svg {
    width: 17px;
    height: 17px;
}
.type-name {
    flex: 1;
    padding-left: 3px;
}
.instance {
    display: flex;
    align-items: center;
    justify-content: space-between;
    height: 17px;
    padding: 0 3px 0 1px;
    background: #f4f4f4;
}
.instance select {
    width: 120px;
    height: 13px;
    border-bottom: 1px solid #ccc;
}
.instance button {
    display: flex;
    align-items: center;
    gap: 2px;
}
.grid {
    flex: 1;
    min-height: 0;
    padding-right: 3px;
    background: #fff;
}
table {
    width: 100%;
    table-layout: fixed;
    border-collapse: collapse;
}
td, th {
    height: 9px;
    padding: 0;
    line-height: 8px;
    text-align: left;
    font-weight: normal;
    white-space: nowrap;
    border-bottom: 1px solid #f3f3f3;
}
td:first-child {
    padding-left: 4px;
    border-right: 1px solid #eee;
}
td:last-child {
    padding-right: 4px;
}
.head th {
    height: 10px;
    line-height: 9px;
    background: #f1f1f1;
}
.head .caret {
    float: right;
    margin: 1px 2px 0 0;
}
.off {
    color: #a5a5a5;
}
td button, td input[type="text"] {
    display: block;
    width: 100%;
    height: 8px;
    line-height: 6px;
    border: 1px solid #ccc;
    background: #f4f4f4;
}
td input[type="text"] {
    border-color: #555;
    background: #fff;
    padding-left: 2px;
}
input[type="checkbox"] {
    appearance: none;
    display: block;
    width: 6px;
    height: 6px;
    margin-left: 1px;
    border: 1px solid #999;
    background: #fff;
}
input[type="checkbox"]:disabled {
    border-color: #ddd;
}
.apply-row {
    display: flex;
    align-items: center;
    justify-content: space-between;
    height: 14px;
    padding-right: 2px;
    background: #f1f1f1;
}
.apply-row a {
    color: #1c74a8;
}
.apply-row button {
    width: 36px;
    height: 10px;
    border: 1px solid #ddd;
    color: #aaa;
}
.dock-tabs {
    display: flex;
    height: 11px;
    flex: none;
    background: #f4f4f4;
}
.dock-tabs button {
    padding: 0 3px;
    background: #cfcfcf;
}
.dock-tabs .current {
    background: #f4f4f4;
}

/* drawing area */
.center {
    display: flex;
    flex-direction: column;
    flex: 1;
    min-width: 0;
    background: #fff;
}
.view-tabs {
    display: flex;
    align-items: center;
    height: 12px;
    flex: none;
    background: #cbcbcb;
}
.view-tabs button {
    display: flex;
    align-items: center;
    gap: 3px;
    height: 12px;
    padding: 0 2px;
}
.view-tabs .current {
    background: #fff;
    font-weight: bold;
}
.view-tabs .x {
    width: 7px;
    height: 7px;
    margin-left: 2px;
}
.end {
    margin-left: auto;
}
.view-body {
    display: flex;
    flex: 1;
    min-height: 0;
}
.canvas {
    position: relative;
    flex: 1;
    min-width: 0;
}
#model {
    display: block;
    width: 100%;
    height: 100%;
}
.viewcube {
    position: absolute;
    top: 28px;
    right: 11px;
    width: 70px;
    height: 50px;
}
.viewcube text {
    font-size: 5px;
    font-weight: bold;
    fill: #888;
}
.navbar {
    position: absolute;
    top: 87px;
    right: 0;
    width: 18px;
    height: 60px;
}
.vscroll {
    display: flex;
    flex-direction: column;
    align-items: center;
    justify-content: space-between;
    width: 9px;
    background: #ececec;
}
.vscroll i, .hscroll i {
    font-style: normal;
}
.vscroll b {
    width: 3px;
    height: 8px;
    background: #ccc;
}
.view-bar {
    display: flex;
    align-items: center;
    height: 11px;
    flex: none;
    gap: 4px;
    background: #f4f4f4;
}
.scale {
    width: 38px;
    padding-left: 13px;
}
.hscroll {
    display: flex;
    flex: 1;
    justify-content: space-between;
    height: 9px;
    margin-right: 9px;
    background: #e6e6e6;
}
.hscroll b {
    width: 8px;
    height: 3px;
    margin-top: 3px;
    background: #ccc;
}

/* project browser */
.search {
    display: flex;
    align-items: center;
    gap: 4px;
    height: 13px;
    flex: none;
    margin: 2px 5px 5px;
    padding-left: 3px;
    border: 1px solid #ddd;
}
.search input {
    width: 100px;
}
.search input::placeholder {
    color: #999;
}
.tree {
    flex: 1;
    min-height: 0;
    list-style: none;
}
.tree ul {
    list-style: none;
    margin-left: 6px;
    padding-left: 2px;
    border-left: 1px dotted #bbb;
}
.tree .leaves {
    margin-left: 5px;
    padding-bottom: 1px;
}
.tree p {
    display: flex;
    align-items: center;
    gap: 2px;
    height: 10px;
    padding-left: 2px;
}
.tree i {
    width: 7px;
    font-style: normal;
    font-size: 8px;
    text-align: center;
}
.leaves p::before {
    content: '';
    width: 10px;
    border-top: 1px dotted #bbb;
}
.tree .leaves p {
    padding-left: 0;
}
.tree .selected {
    background: #eee;
    font-weight: bold;
}
.shaded {
    background: #f0f0f0;
}

/* status bar */
.status {
    display: flex;
    align-items: center;
    height: 12px;
    flex: none;
    gap: 2px;
    background: #f4f4f4;
}
.hint {
    width: 452px;
}
.workset {
    width: 110px;
    text-align: right;
}
.requests {
    display: flex;
    width: 24px;
}
.option {
    display: flex;
    align-items: center;
    justify-content: space-between;
    width: 106px;
    padding-left: 2px;
    color: #aaa;
}
.filters {
    display: flex;
    align-items: center;
    gap: 3px;
    margin-left: auto;
    padding-right: 36px;
}

/* callouts */
.arrow {
    position: absolute;
    width: 26px;
    height: 96px;
    fill: #05a5f2;
}
.shaft {
    stroke: #05a5f2;
    stroke-width: 7;
    stroke-linecap: round;
}
.arrow-1 {
    left: 513px;
    top: 29px;
}
.arrow-2 {
    left: 286px;
    top: 53px;
}
.step {
    position: absolute;
    width: 20px;
    height: 20px;
    border-radius: 50%;
    background: #05a5f2;
    color: #556;
    font-family: 'Liberation Sans', sans-serif;
    font-size: 14px;
    line-height: 20px;
    text-align: center;
}
.step-1 {
    left: 539px;
    top: 96px;
}
.step-2 {
    left: 312px;
    top: 121px;
}
```

FILE: model.js
```
// Draws the analytical model: slabs, columns and line loads along slab edges
const svg = document.getElementById('model');
const SLAB = '#bea48d';

function add(tag, attrs) {
    const el = document.createElementNS('http://www.w3.org/2000/svg', tag);
    for (const key in attrs) el.setAttribute(key, attrs[key]);
    svg.appendChild(el);
}

function poly(points, fill, opacity, stroke) {
    add('polygon', { points: points.map(p => p.join()).join(' '), fill: fill, 'fill-opacity': opacity || 1, stroke: stroke || 'none', 'stroke-width': 0.6 });
}

function line(x1, y1, x2, y2, color, width) {
    add('path', { d: `M${x1} ${y1}L${x2} ${y2}`, stroke: color, 'stroke-width': width || 0.7, fill: 'none' });
}

// purple load line with arrows down to the edge, yellow line at mid height
function rail(points, band, step) {
    step = step || 6.2;
    for (let i = 0; i < points.length - 1; i++) {
        const [x1, y1] = points[i];
        const [x2, y2] = points[i + 1];
        if (band) poly([[x1, y1 + 3], [x2, y2 + 3], [x2, y2 + 8], [x1, y1 + 8]], SLAB);
        const n = Math.max(1, Math.round(Math.abs(x2 - x1) / step));
        let ticks = '', posts = '';
        for (let k = 0; k <= n; k++) {
            const x = x1 + (x2 - x1) * k / n;
            const y = y1 + (y2 - y1) * k / n;
            ticks += `M${x} ${y}v5`;
            posts += `M${x} ${y + 5}v3`;
        }
        add('path', { d: posts, stroke: '#f2c14a', 'stroke-width': 0.6, fill: 'none' });
        line(x1, y1 + 4.5, x2, y2 + 4.5, '#f6c65a', 0.7);
        line(x1, y1 + 8, x2, y2 + 8, '#f4c04f', 0.7);
        add('path', { d: ticks, stroke: '#7b2278', 'stroke-width': 0.7, fill: 'none' });
        line(x1, y1, x2, y2, '#7b2278', 0.9);
    }
}

function column(x, y1, y2, w) {
    poly([[x, y1], [x + w, y1], [x + w, y2], [x, y2]], '#fba674', 0.42, '#f59a62');
}

// opening in a slab with a load line round it
function opening(x, y, w) {
    poly([[x, y + 5], [x + w * 0.45, y], [x + w, y + 7], [x + w, y + 13], [x + w * 0.55, y + 17], [x, y + 11]], '#f9c9a0', 0.6);
    rail([[x, y + 5], [x + w * 0.45, y], [x + w, y + 7]], false, 5);
    rail([[x, y + 5], [x + w * 0.55, y + 11], [x + w, y + 7]], false, 5);
}

function slab(points, fill) {
    poly(points.map(p => [p[0], p[1] + 7]), fill || SLAB);
}

// podium walls and basement slabs
poly([[245, 388], [369, 430], [452, 410], [457, 408], [480, 417], [563, 395], [731, 352], [731, 398], [480, 462], [457, 454], [369, 477], [245, 435]], '#ddb392');
poly([[245, 390], [290, 402], [245, 412]], '#fbd6ba');
poly([[245, 415], [280, 425], [245, 433]], '#f7cfb0');
poly([[731, 354], [690, 364], [731, 376]], '#fbd6ba');
poly([[731, 378], [700, 386], [731, 395]], '#f7cfb0');
rail([[245, 408], [290, 397]]);
rail([[245, 428], [280, 419]]);
rail([[690, 361], [731, 372]]);
rail([[700, 384], [731, 392]]);
rail([[612, 383], [646, 391]]);

// podium deck
slab([[245, 383], [369, 425], [457, 404], [480, 410], [563, 389], [732, 346], [600, 302], [500, 315]]);
poly([[457, 400], [532, 380], [563, 391], [563, 396], [480, 417], [457, 409]], SLAB, 1, '#f0a068');
rail([[245, 383], [345, 358]]);
rail([[600, 304], [732, 346]]);

// typical floors from the bottom up
const floors = [103, 77.5, 52, 26, 0];
floors.forEach(d => {
    const outline = [[245, 235 + d], [328, 262 + d], [580, 198 + d], [615, 208 + d], [699, 187 + d], [584, 147 + d]];
    slab(outline);
    line(330, 270 + d, 378, 283 + d, '#ef9d66');
    line(450, 250 + d, 580, 217 + d, '#ef9d66', 0.5);
    line(615, 200 + d, 680, 184 + d, '#ef9d66', 0.5);
    rail([[245, 235 + d], [584, 147 + d], [699, 187 + d]]);
    // fill over the far side of the edge that lies behind the next slab
    if (d > 0) slab([[290, 224 + d], [584, 146 + d], [655, 172 + d], [640, 190 + d], [300, 240 + d]]);
});

// walls of the cores, seen between the floors
[371, 496, 570].forEach((x, i) => {
    const top = [345, 320, 318][i];
    poly([[x, top], [x + 82 - i * 26, top - 18], [x + 82 - i * 26, top + 28], [x, top + 42]], '#fdc39a', 0.6, '#f3a673');
});
opening(360, 368, 35);
opening(423, 354, 27);
opening(504, 333, 26);
opening(560, 317, 31);

// columns
column(245, 241, 383, 7);
column(325, 268, 413, 10);
column(370, 258, 400, 7);
column(412, 247, 388, 7);
column(454, 237, 378, 7);
column(496, 226, 373, 7);
column(537, 188, 365, 8);
column(579, 176, 345, 8);
column(598, 186, 340, 6);
column(653, 176, 353, 7);
column(682, 168, 340, 6);
column(695, 165, 342, 4);
column(280, 345, 373, 4);
column(290, 345, 372, 7);

// inner parts of the floors and the front edges
floors.forEach(d => {
    poly([[378, 258 + d], [395, 250 + d], [450, 238 + d], [450, 244 + d], [385, 261 + d]], '#f4c49b', 0.75);
    rail([[378, 253 + d], [394, 250 + d]], false, 4);
    rail([[438, 239 + d], [450, 241 + d]], false, 4);
    poly([[514, 220 + d], [534, 212 + d], [550, 210 + d], [550, 216 + d], [520, 226 + d]], '#f4c49b', 0.75);
    poly([[565, 181 + d], [592, 176 + d], [592, 181 + d], [578, 186 + d]], '#f4c49b', 0.75);
    rail([[551, 185 + d], [580, 198 + d]], true, 4);
    rail([[245, 235 + d], [328, 262 + d], [580, 198 + d], [615, 208 + d], [699, 187 + d]], true);
});

// roof of the left wing
slab([[250, 236], [328, 261], [535, 207], [535, 178], [500, 171]]);
rail([[245, 235], [503, 168]]);
rail([[245, 235], [328, 262], [542, 208]], true);
line(295, 230, 375, 254, '#ef9d66');
line(395, 229, 500, 203, '#ef9d66');
line(423, 213, 442, 221, '#ef9d66');
line(385, 227, 490, 197, '#ef9d66');
column(537, 188, 214, 8);
opening(360, 220, 35);
opening(504, 184, 26);

// tower roof
poly([[500, 172], [542, 186], [542, 210], [500, 199]], '#fdc39a', 0.25);
column(459, 158, 187, 5);
slab([[459, 152], [542, 180], [580, 169], [615, 180], [699, 159], [584, 119]]);
line(515, 163, 580, 147, '#ef9d66');
line(600, 173, 665, 155, '#ef9d66');
rail([[459, 152], [584, 119], [699, 159]]);
rail([[507, 143], [580, 169]], true, 4);
opening(559, 141, 31);
rail([[459, 152], [542, 180], [580, 169], [615, 180], [699, 159]], true);

// podium edges
rail([[328, 411], [583, 346], [647, 368]], true);
rail([[530, 333], [583, 348]], false, 4);
rail([[245, 383], [369, 425], [452, 405]], true);
rail([[448, 399], [457, 403]], false, 4);
rail([[448, 399], [532, 378], [563, 389], [732, 346]], true);
rail([[245, 408], [369, 451], [457, 428], [480, 434], [731, 371]]);
rail([[245, 428], [369, 470], [457, 448], [480, 455], [731, 390]]);
[[245, 390, 435], [328, 418, 461], [369, 432, 477], [457, 408, 454], [480, 417, 462], [532, 386, 405], [647, 375, 392], [731, 352, 398]].forEach(p => {
    line(p[0], p[1], p[0], p[2], '#f2a069');
});

// point supports
const base = [[245, 435], [369, 477], [457, 454], [480, 462], [731, 398]];
for (let i = 0; i < base.length - 1; i++) {
    const [x1, y1] = base[i];
    const [x2, y2] = base[i + 1];
    const n = Math.round((x2 - x1) / 12);
    for (let k = 0; k <= n; k++) {
        add('circle', { cx: x1 + (x2 - x1) * k / n, cy: y1 + (y2 - y1) * k / n, r: 1.4, fill: '#222' });
    }
}
```
